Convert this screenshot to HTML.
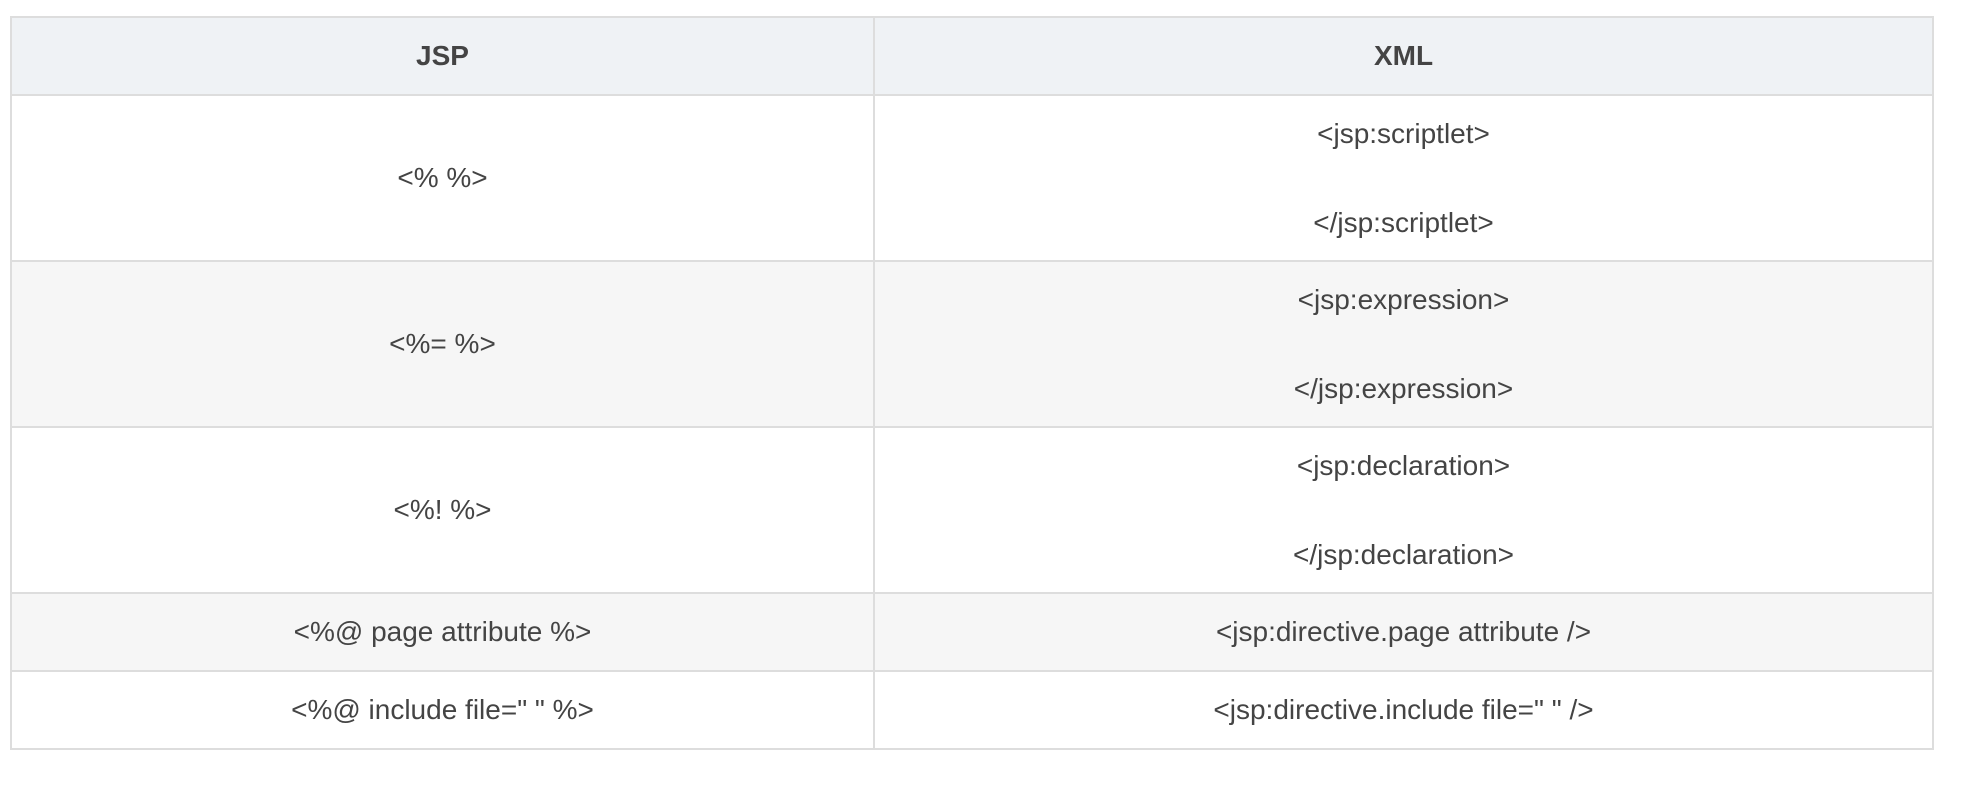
<!DOCTYPE html>
<html><head><meta charset="utf-8"><style>
html,body{margin:0;padding:0;background:#fff;width:1968px;height:794px;overflow:hidden}
table{position:absolute;left:10px;top:16px;width:1924px;border-collapse:collapse;font-family:"Liberation Sans",Arial,sans-serif;font-size:28px;color:#444;table-layout:fixed}
td,th{border:2px solid #dddddd;text-align:center;vertical-align:middle;padding:0}
th{background:#eff2f5;font-weight:bold;height:76px;color:#444}
tr.big td{height:164px}
tr.sm td{height:76px}
tr.alt td{background:#f6f6f6}
.l{line-height:36px}
.g{margin-top:53px}
</style></head><body>
<table>
<colgroup><col style="width:863px"><col></colgroup>
<tr><th>JSP</th><th>XML</th></tr>
<tr class="big"><td>&lt;% %&gt;</td><td><div class="l">&lt;jsp:scriptlet&gt;</div><div class="l g">&lt;/jsp:scriptlet&gt;</div></td></tr>
<tr class="big alt"><td>&lt;%= %&gt;</td><td><div class="l">&lt;jsp:expression&gt;</div><div class="l g">&lt;/jsp:expression&gt;</div></td></tr>
<tr class="big"><td>&lt;%! %&gt;</td><td><div class="l">&lt;jsp:declaration&gt;</div><div class="l g">&lt;/jsp:declaration&gt;</div></td></tr>
<tr class="sm alt"><td>&lt;%@ page attribute %&gt;</td><td>&lt;jsp:directive.page attribute /&gt;</td></tr>
<tr class="sm"><td>&lt;%@ include file=" " %&gt;</td><td>&lt;jsp:directive.include file=" " /&gt;</td></tr>
</table>
</body></html>
